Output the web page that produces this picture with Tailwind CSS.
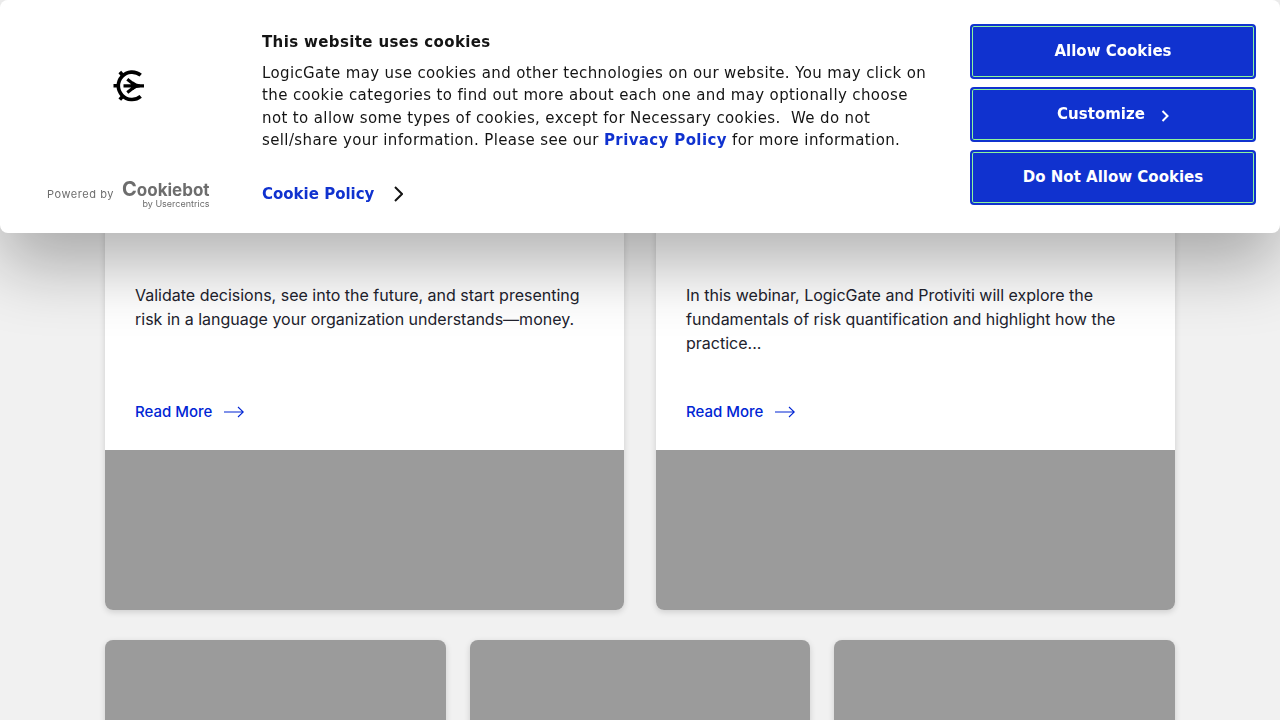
<!DOCTYPE html>
<html lang="en">
<head>
<meta charset="utf-8">
<meta name="viewport" content="width=device-width, initial-scale=1">
<title>LogicGate Resources</title>
<script src="https://cdn.jsdelivr.net/npm/@tailwindcss/browser@4"></script>
</head>
<body class="bg-[#f1f1f1] font-['Inter',sans-serif] text-base text-[#21222d] h-screen overflow-hidden">

<main class="mx-auto max-w-[1070px] pt-10">
  <section class="grid grid-cols-2 gap-8">
    <article class="flex flex-col overflow-hidden rounded-lg bg-white shadow-[0_2px_6px_rgba(0,0,0,0.15)]">
      <div class="flex h-[410px] flex-col px-[30px] pb-[26px] pt-[243px]">
        <p>Validate decisions, see into the future, and start presenting risk in a language your organization understands—money.</p>
        <a href="#" class="mt-auto flex items-center gap-3 text-[15px] leading-6 font-medium text-[#0025d4]">Read More
          <svg class="h-3 w-5" viewBox="0 0 20 12" fill="none" stroke="currentColor" stroke-width="1.1"><path d="M0 6h19.3M14 1l5.3 5L14 11"/></svg>
        </a>
      </div>
      <div class="h-40 bg-[#9b9b9b]"></div>
    </article>
    <article class="flex flex-col overflow-hidden rounded-lg bg-white shadow-[0_2px_6px_rgba(0,0,0,0.15)]">
      <div class="flex h-[410px] flex-col px-[30px] pb-[26px] pt-[243px]">
        <p>In this webinar, LogicGate and Protiviti will explore the fundamentals of risk quantification and highlight how the practice...</p>
        <a href="#" class="mt-auto flex items-center gap-3 text-[15px] leading-6 font-medium text-[#0025d4]">Read More
          <svg class="h-3 w-5" viewBox="0 0 20 12" fill="none" stroke="currentColor" stroke-width="1.1"><path d="M0 6h19.3M14 1l5.3 5L14 11"/></svg>
        </a>
      </div>
      <div class="h-40 bg-[#9b9b9b]"></div>
    </article>
  </section>
  <section class="mt-[30px] grid grid-cols-3 gap-6">
    <article class="h-80 rounded-lg bg-[#9b9b9b] shadow-[0_2px_6px_rgba(0,0,0,0.15)]"></article>
    <article class="h-80 rounded-lg bg-[#9b9b9b] shadow-[0_2px_6px_rgba(0,0,0,0.15)]"></article>
    <article class="h-80 rounded-lg bg-[#9b9b9b] shadow-[0_2px_6px_rgba(0,0,0,0.15)]"></article>
  </section>
</main>

<div role="dialog" aria-labelledby="cookie-title" class="fixed inset-x-0 top-0 flex rounded-lg bg-white pb-6 pr-6 pt-6 font-['DejaVu_Sans',sans-serif] text-[15px] leading-normal text-[#141414] shadow-[0_32px_68px_rgba(0,0,0,0.3)]">
  <div class="flex w-[262px] shrink-0 flex-col justify-between pl-[47px] pt-[46px]">
    <svg class="ml-[66px] h-8 w-8" viewBox="0 0 32 32" fill="none" stroke="#000" stroke-width="3.6" role="img" aria-label="LogicGate">
      <path d="M27.700 5.200A13.700 13.700 0 1 0 27.700 26.400"/>
      <path d="M.5 15.800h4M6.800 2l3 3.500M6.800 29.600l3-3.500" stroke-width="3.600"/>
      <path d="M10.500 15.800h20.500M14.300 9.200l8 6.200M14.300 22.400l8-6.200" stroke-width="3.200"/>
      <path d="M20 11.600q3 2.500 7 2.800v2.800q-4 .3-7 2.800z" fill="#000" stroke="none"/>
    </svg>
    <a href="#" class="flex items-center gap-2 text-[#6d6d6d]" aria-label="Powered by Cookiebot by Usercentrics">
      <span class="font-['Inter',sans-serif] text-[11px] tracking-wider">Powered by</span>
      <span class="flex flex-col items-end font-['Inter',sans-serif]">
        <span class="text-[17px] font-bold leading-[18px]"><span class="text-[20px]">C</span>ookiebot</span>
        <span class="text-[9px] leading-[10px]">by Usercentrics</span>
      </span>
    </a>
  </div>
  <div class="flex min-w-0 flex-1 flex-col pb-1 pt-[7px]">
    <h2 id="cookie-title" class="font-bold tracking-wide">This website uses cookies</h2>
    <p class="mt-2 max-w-[670px] tracking-wide">LogicGate may use cookies and other technologies on our website. You may click on the cookie categories to find out more about each one and may optionally choose not to allow some types of cookies, except for Necessary cookies.&nbsp; We do not sell/share your information. Please see our <a href="#" class="font-bold text-[#1032cf]">Privacy Policy</a> for more information.</p>
    <a href="#" class="mt-[31px] flex items-center gap-5 font-bold text-[#1032cf]">Cookie Policy
      <svg class="h-4 w-[9px]" viewBox="0 0 9 16" fill="none" stroke="#141414" stroke-width="2"><path d="M1 1l7 7-7 7"/></svg>
    </a>
  </div>
  <div class="flex w-[286px] shrink-0 flex-col gap-2 font-bold text-white">
    <button class="flex h-[55px] items-center justify-center rounded border-2 border-[#1032cf] bg-[#1032cf] shadow-[inset_0_0_0_1px_#8df59b]">Allow Cookies</button>
    <button class="flex h-[55px] items-center justify-center gap-4 rounded border-2 border-[#1032cf] bg-[#1032cf] shadow-[inset_0_0_0_1px_#8df59b]">Customize
      <svg class="mt-[3px] h-3 w-2" viewBox="0 0 8 12" fill="none" stroke="currentColor" stroke-width="2"><path d="M1.500 1L6.500 6 1.500 11"/></svg>
    </button>
    <button class="flex h-[55px] items-center justify-center rounded border-2 border-[#1032cf] bg-[#1032cf] shadow-[inset_0_0_0_1px_#8df59b]">Do Not Allow Cookies</button>
  </div>
</div>
</body>
</html>
